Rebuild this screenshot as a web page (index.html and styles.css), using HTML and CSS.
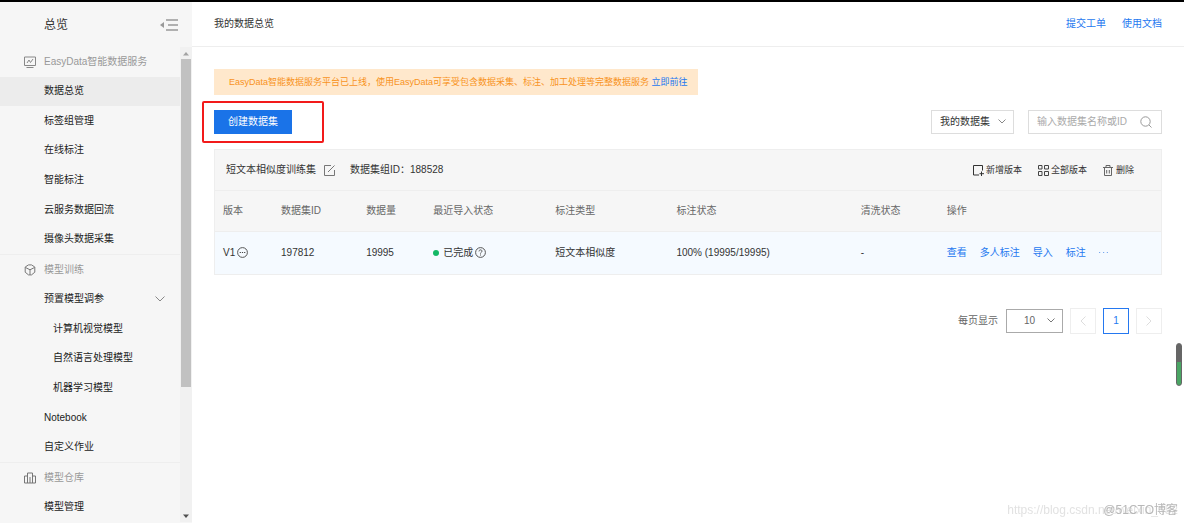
FILE: index.html
```html
<!DOCTYPE html>
<html lang="zh-CN">
<head>
<meta charset="utf-8">
<title>我的数据总览</title>
<link rel="stylesheet" href="styles.css">
</head>
<body>
<div class="app">
  <aside class="sidebar">
    <div class="sidebar-head">
      <span class="sidebar-title">总览</span>
      <button class="icon-btn" type="button" aria-label="收起菜单">
        <svg width="18" height="12" viewBox="0 0 18 12"><path d="M4 3v6L0 6z" fill="#999"/><path d="M6 1h12M8 6h10M6 11h12" stroke="#999" stroke-width="1.4"/></svg>
      </button>
    </div>
    <div class="sidebar-body">
      <nav class="menu">
        <div class="menu-group">
          <svg width="12" height="12" viewBox="0 0 12 12" fill="none" stroke="#888"><path d="M.5 1h11v8.500H.5zM2.500 11.500h7M3 7l2-3 1.500 2.500L9 3"/></svg>
          EasyData智能数据服务
        </div>
        <a class="menu-item active" href="#">数据总览</a>
        <a class="menu-item" href="#">标签组管理</a>
        <a class="menu-item" href="#">在线标注</a>
        <a class="menu-item" href="#">智能标注</a>
        <a class="menu-item" href="#">云服务数据回流</a>
        <a class="menu-item" href="#">摄像头数据采集</a>
        <div class="menu-group divided">
          <svg width="12" height="12" viewBox="0 0 12 12" fill="none" stroke="#777"><path d="M4.500.9h3L10.800 3v5.200L7.500 10.900h-3L1.200 8.200V3zM1.500 3.500 6 5.800l4.500-2.300M6 5.800v5"/></svg>
          模型训练
        </div>
        <a class="menu-item" href="#">预置模型调参
          <svg width="10" height="6" viewBox="0 0 10 6" fill="none" stroke="#888"><path d="M.5.5 5 5 9.500.5"/></svg>
        </a>
        <a class="menu-item sub" href="#">计算机视觉模型</a>
        <a class="menu-item sub" href="#">自然语言处理模型</a>
        <a class="menu-item sub" href="#">机器学习模型</a>
        <a class="menu-item" href="#">Notebook</a>
        <a class="menu-item" href="#">自定义作业</a>
        <div class="menu-group divided">
          <svg width="12" height="12" viewBox="0 0 12 12" fill="none" stroke="#777"><path d="M3.500 11V1h5v10M3.500 4h-3v7h11V4h-3M6 11V5"/></svg>
          模型仓库
        </div>
        <a class="menu-item" href="#">模型管理</a>
      </nav>
      <div class="scrollbar" aria-hidden="true">
        <svg width="12" height="12" viewBox="0 0 12 12"><path d="M3 8.500 6 5l3 3.500z" fill="#a3a3a3"/></svg>
        <div class="scroll-thumb"></div>
        <div class="scroll-rest"></div>
        <svg width="12" height="12" viewBox="0 0 12 12"><path d="M3 4.500h6L6 8z" fill="#505050"/></svg>
      </div>
    </div>
  </aside>

  <main class="main">
    <header class="topbar">
      <h1 class="page-title">我的数据总览</h1>
      <div class="top-links"><a href="#">提交工单</a><a href="#">使用文档</a></div>
    </header>
    <div class="content">
      <div class="notice">EasyData智能数据服务平台已上线，使用EasyData可享受包含数据采集、标注、加工处理等完整数据服务 <a href="#">立即前往</a></div>
      <div class="toolbar">
        <div class="create-wrap">
          <button class="create" type="button">创建数据集</button>
          <span class="highlight"></span>
        </div>
        <div class="filters">
          <label class="select-box">
            <select class="owner" aria-label="数据集范围"><option>我的数据集</option></select>
            <svg class="caret" width="8" height="5" viewBox="0 0 8 5" fill="none" stroke="#888"><path d="M.5.5 4 4 7.500.5"/></svg>
          </label>
          <div class="search">
            <input type="text" placeholder="输入数据集名称或ID" aria-label="输入数据集名称或ID">
            <svg width="12" height="12" viewBox="0 0 12 12" fill="none" stroke="#999"><circle cx="5.500" cy="5.500" r="4.700"/><path d="m9 9 2.500 2.500"/></svg>
          </div>
        </div>
      </div>

      <section class="card">
        <div class="card-head">
          <span>短文本相似度训练集</span>
          <button class="icon-btn edit" type="button" aria-label="编辑名称">
            <svg width="11" height="11" viewBox="0 0 11 11" fill="none" stroke="#777"><path d="M7 .5H.5v10h10V5M4 7 10.500.5"/></svg>
          </button>
          <span>数据集组ID：188528</span>
          <div class="card-actions">
            <button type="button"><svg width="11" height="11" viewBox="0 0 11 11" fill="none" stroke="#333"><path d="M6 10H.5V.5H9.500v5M8.500 6.500v4.500M6.500 8.700h4.500"/></svg>新增版本</button>
            <button type="button"><svg width="11" height="11" viewBox="0 0 11 11" fill="none" stroke="#444"><path d="M.5.5h3.500v3.500H.5zM6.500.5h4v3.500h-4zM.5 6.500h3.500v4H.5zM6.500 6.500h4v4h-4z"/></svg>全部版本</button>
            <button type="button"><svg width="11" height="11" viewBox="0 0 11 11" fill="none" stroke="#666"><path d="M0 2.500h10M3 2.500v-2h4v2M1.500 2.500v8h7v-8M3.700 5v3.500M6.300 5v3.500"/></svg>删除</button>
          </div>
        </div>
        <table class="versions">
          <thead>
            <tr><th class="c-ver">版本</th><th class="c-id">数据集ID</th><th class="c-num">数据量</th><th class="c-import">最近导入状态</th><th class="c-type">标注类型</th><th class="c-state">标注状态</th><th class="c-clean">清洗状态</th><th class="c-ops">操作</th></tr>
          </thead>
          <tbody>
            <tr>
              <td><span class="inline">V1<svg width="11" height="11" viewBox="0 0 11 11"><circle cx="5.500" cy="5.500" r="4.900" fill="none" stroke="#555"/><path d="M2.700 5.500h1.200M4.900 5.500h1.200M7.100 5.500h1.200" stroke="#444" stroke-width="1.200"/></svg></span></td>
              <td>197812</td>
              <td>19995</td>
              <td><span class="inline"><i class="dot"></i>已完成<svg width="11" height="11" viewBox="0 0 11 11" fill="none" stroke="#555"><circle cx="5.500" cy="5.500" r="4.900"/><path d="M4 4.400C4 2.400 7 2.400 7 4.200 7 5.300 5.500 5.200 5.500 6.600M5.500 7.500v1"/></svg></span></td>
              <td>短文本相似度</td>
              <td>100% (19995/19995)</td>
              <td>-</td>
              <td><span class="ops"><a href="#">查看</a><a href="#">多人标注</a><a href="#">导入</a><a href="#">标注</a><button class="icon-btn" type="button" aria-label="更多"><svg width="9" height="3" viewBox="0 0 9 3" fill="#7aa9ee"><path d="M0 1h1.200v1H0zM4 1h1.200v1H4zM7.800 1H9v1H7.800z"/></svg></button></span></td>
            </tr>
          </tbody>
        </table>
      </section>

      <div class="pager">
        <label class="pager-label" for="size">每页显示</label>
        <div class="select-box">
          <select class="size" id="size"><option>10</option></select>
          <svg class="caret" width="8" height="5" viewBox="0 0 8 5" fill="none" stroke="#777"><path d="M.5.5 4 4 7.500.5"/></svg>
        </div>
        <button class="page" type="button" aria-label="上一页" disabled><svg width="6" height="10" viewBox="0 0 6 10" fill="none" stroke="#ddd"><path d="M5.500.5 1 5l4.500 4.500"/></svg></button>
        <button class="page current" type="button">1</button>
        <button class="page" type="button" aria-label="下一页" disabled><svg width="6" height="10" viewBox="0 0 6 10" fill="none" stroke="#ddd"><path d="M.5.5 5 5 .5 9.500"/></svg></button>
      </div>
    </div>
  </main>
</div>
<div class="meter"></div>
<div class="mark mark-url">https://blog.csdn.net/weixin_452</div>
<div class="mark mark-site">@51CTO博客</div>
</body>
</html>
```

FILE: styles.css
```css
* { box-sizing: border-box; }
body {
  margin: 0;
  background: #fff;
  color: #333;
  font: 10px/16px "Liberation Sans", "Noto Sans CJK SC", sans-serif;
}
a { color: #2478f0; text-decoration: none; }
svg { display: block; flex: none; }
button, input, select { font: inherit; color: inherit; margin: 0; }
button { padding: 0; border: 0; background: none; white-space: nowrap; }
.app { display: flex; min-height: 100vh; border-top: 2px solid #000; }

.sidebar {
  width: 192px;
  flex: none;
  display: flex;
  flex-direction: column;
  background: #f6f6f6;
}
.sidebar-head {
  height: 45px;
  display: flex;
  align-items: center;
  justify-content: space-between;
  padding: 0 14px 0 44px;
}
.sidebar-title { font-size: 12px; }
.sidebar-body { flex: 1; display: flex; margin-bottom: 1px; }
.menu { flex: 1; display: flex; flex-direction: column; }
.menu-group, .menu-item { flex: 1; display: flex; align-items: center; }
.menu-group { gap: 8px; padding-left: 24px; color: #999; }
.menu-group.divided { border-top: 1px solid #eee; }
.menu-item { justify-content: space-between; padding: 0 15px 0 44px; color: #222; }
.menu-item.active { background: #ececec; }
.menu-item.sub { padding-left: 53px; }
.scrollbar { width: 12px; display: flex; flex-direction: column; background: #f1f1f1; }
.scroll-thumb { flex: 327; margin: 0 1px; background: #c1c1c1; }
.scroll-rest { flex: 123; }

.main { flex: 1; min-width: 0; }
.topbar {
  height: 45px;
  display: flex;
  align-items: center;
  justify-content: space-between;
  padding: 0 22px;
  border-bottom: 1px solid #eee;
}
.page-title { margin: 0; font-size: 10px; font-weight: 400; }
.top-links { display: flex; gap: 16px; }
.content { padding: 22px 22px 0; }
.notice {
  width: fit-content;
  padding: 5px 10px 5px 15px;
  background: #ffe8cc;
  color: #f8931d;
  font-size: 9px;
}
.toolbar { display: flex; justify-content: space-between; margin: 15px 0; }
.create-wrap { position: relative; }
.create { height: 24px; padding: 0 14px; background: #1a73e8; color: #fff; }
.highlight {
  position: absolute;
  inset: -9px -32px -9px -12px;
  border: 2px solid #f21a1a;
  border-radius: 2px;
  pointer-events: none;
}
.filters { display: flex; gap: 14px; }
.select-box { position: relative; display: flex; }
.select-box select {
  height: 24px;
  appearance: none;
  background: #fff;
  border: 1px solid #ddd;
  border-radius: 0;
  padding: 0 8px;
}
.select-box .owner { width: 83px; }
.select-box .size { width: 57px; border-color: #aaa; padding-left: 17px; color: #666; }
.caret { position: absolute; right: 8px; top: 9px; pointer-events: none; }
.search {
  width: 134px;
  height: 24px;
  display: flex;
  align-items: center;
  padding: 0 9px 0 8px;
  border: 1px solid #ddd;
}
.search input { flex: 1; min-width: 0; padding: 0; border: 0; outline: 0; background: none; }
.search input::placeholder { color: #aaa; }

.card { border: 1px solid #eee; background: #f6f6f6; }
.card-head { height: 40px; display: flex; align-items: center; padding: 0 27px 0 11px; }
.edit { margin: 0 15px 0 8px; }
.card-actions { display: flex; gap: 16px; margin-left: auto; font-size: 9px; }
.card-actions button { display: flex; align-items: center; gap: 2px; }
.versions { width: 100%; table-layout: fixed; border-collapse: collapse; }
.versions th, .versions td {
  height: 42px;
  padding: 0 0 0 8px;
  border-top: 1px solid #eee;
  text-align: left;
  font-weight: 400;
  white-space: nowrap;
}
.versions th { height: 41px; color: #666; }
.versions td { background: #f5faff; }
.c-ver { width: 58px; }
.c-id { width: 85px; }
.c-num { width: 67px; }
.c-import { width: 122px; }
.c-type { width: 121px; }
.c-state { width: 184px; }
.c-clean { width: 86px; }
.c-ops { width: 222px; }
.inline { display: flex; align-items: center; gap: 2px; }
.dot { width: 6px; height: 6px; margin-right: 2px; border-radius: 50%; background: #14b866; }
.ops { display: flex; align-items: center; gap: 13px; }

.pager { display: flex; align-items: center; justify-content: flex-end; gap: 7px; margin-top: 33px; }
.pager-label { color: #666; margin-right: 1px; }
.page {
  width: 26px;
  height: 26px;
  display: flex;
  align-items: center;
  justify-content: center;
  border: 1px solid #eee;
}
.page.current { border-color: #2478f0; color: #2478f0; }

.meter {
  position: fixed;
  right: 2px;
  top: 343px;
  width: 6px;
  height: 43px;
  border: 1px solid #666;
  border-radius: 3px;
  background: linear-gradient(#666 18px, #4aa564 18px);
}
.mark { position: fixed; right: 6px; bottom: 5px; white-space: nowrap; pointer-events: none; }
.mark-url { color: #e2e2e2; font-size: 12px; }
.mark-site { color: #b8b8b8; font-size: 12px; }
```
